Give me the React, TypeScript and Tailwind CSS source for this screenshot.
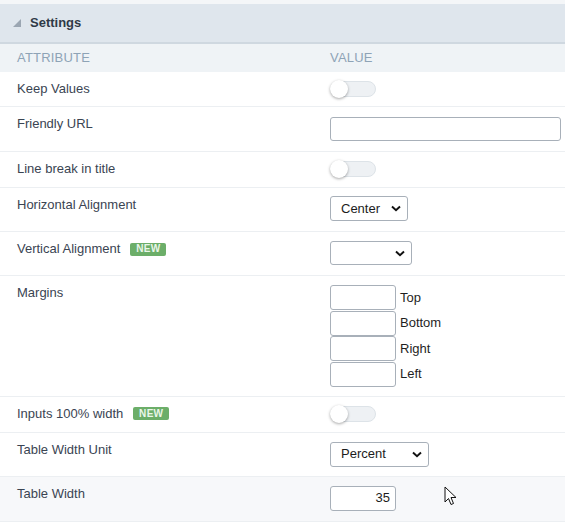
import React from "react";

const Badge = () => (
  <span className="inline-flex items-center justify-center h-[13px] w-[36px] rounded-[2px] bg-[#6cae69] text-[#eaf6ea] text-[10px] font-bold leading-none tracking-[0.3px]">
    NEW
  </span>
);

const Toggle = () => (
  <div className="relative w-[46px] h-[16px] rounded-full bg-[#eef1f4] border border-[#dde3e8]">
    <div className="absolute left-[-1px] top-[-2px] w-[18px] h-[18px] rounded-full bg-white shadow-[0_1px_3px_rgba(0,0,0,0.35)]" />
  </div>
);

const Chevron = () => (
  <svg width="10" height="7" viewBox="0 0 10 7" className="shrink-0">
    <path d="M1 1.5 L5 5.3 L9 1.5" fill="none" stroke="#111" strokeWidth="1.9" />
  </svg>
);

const Select = ({ w, h, text }: { w: string; h: string; text: string }) => (
  <div
    className={`${w} ${h} flex items-center justify-between pl-[10px] pr-[6px] border border-[#a8b0b9] rounded-[3px] bg-white text-[#1c1c1c] text-[13px]`}
  >
    <span>{text}</span>
    <Chevron />
  </div>
);

const Row = ({
  label,
  badge,
  children,
  vp,
  bg = "bg-white",
}: {
  label: string;
  badge?: boolean;
  children: React.ReactNode;
  vp: string;
  bg?: string;
}) => (
  <div className={`grid grid-cols-[330px_1fr] border-b border-[#eceff2] ${bg}`}>
    <div className="pl-[17px] pt-[10px]">
      <div className="flex items-center h-[14px] gap-[10px] text-[#3a4452] leading-[14px]">
        <span>{label}</span>
        {badge && <Badge />}
      </div>
    </div>
    <div className={`pr-[4px] ${vp}`}>{children}</div>
  </div>
);

export default function App() {
  return (
    <div className="relative w-[565px] h-[523px] bg-white text-[13px] font-['Liberation_Sans',Arial,sans-serif] overflow-hidden">
      <div className="h-[4px] bg-[#f4f6f8]" />
      <div className="h-[40px] bg-[#dfe6ed] border-b-2 border-[#cfd8e0] flex items-center pl-[13px]">
        <svg width="8" height="8" viewBox="0 0 8 8" className="mr-[9px]">
          <polygon points="8,0 8,8 0,8" fill="#9ba6b2" />
        </svg>
        <span className="font-bold text-[#2f3a47] text-[13px]">Settings</span>
      </div>
      <div className="h-[28px] bg-[#eff3f6] grid grid-cols-[330px_1fr] items-center text-[#8ea3b6] tracking-[0.2px]">
        <span className="pl-[17px]">ATTRIBUTE</span>
        <span>VALUE</span>
      </div>

      <Row label="Keep Values" vp="pt-[9px] pb-[9px]">
        <Toggle />
      </Row>
      <Row label="Friendly URL" vp="pt-[10px] pb-[10px]">
        <div className="h-[24px] w-full border border-[#a8b0b9] rounded-[3px] bg-white" />
      </Row>
      <Row label="Line break in title" vp="pt-[9px] pb-[10px]">
        <Toggle />
      </Row>
      <Row label="Horizontal Alignment" vp="pt-[8px] pb-[10px]">
        <Select w="w-[78px]" h="h-[25px]" text="Center" />
      </Row>
      <Row label="Vertical Alignment" badge vp="pt-[9px] pb-[10px]">
        <Select w="w-[82px]" h="h-[24px]" text="" />
      </Row>
      <Row label="Margins" vp="pt-[9px] pb-[9px]">
        <div className="flex flex-col gap-[0.5px]">
          {["Top", "Bottom", "Right", "Left"].map((t) => (
            <div key={t} className="flex items-center gap-[4px]">
              <div className="w-[66px] h-[25px] border border-[#a8b0b9] rounded-[3px] bg-white" />
              <span className="text-[#1f1f1f]">{t}</span>
            </div>
          ))}
        </div>
      </Row>
      <Row label="Inputs 100% width" badge vp="pt-[9px] pb-[10px]">
        <Toggle />
      </Row>
      <Row label="Table Width Unit" vp="pt-[9px] pb-[9px]">
        <Select w="w-[99px]" h="h-[25px]" text="Percent" />
      </Row>
      <Row label="Table Width" vp="pt-[9px] pb-[10px]" bg="bg-[#f7f8fa]">
        <div className="w-[66px] h-[25px] border border-[#a8b0b9] rounded-[3px] bg-white flex items-center justify-end pr-[5px] text-[#1c1c1c]">
          35
        </div>
      </Row>

      <svg
        className="absolute left-[444px] top-[486px]"
        width="14"
        height="20"
        viewBox="0 0 14 20"
      >
        <path
          d="M1 1 L1 16 L4.5 12.5 L7 18.5 L9.5 17.5 L7 11.5 L12 11.5 Z"
          fill="#fff"
          stroke="#111"
          strokeWidth="1"
          strokeLinejoin="round"
        />
      </svg>
    </div>
  );
}
